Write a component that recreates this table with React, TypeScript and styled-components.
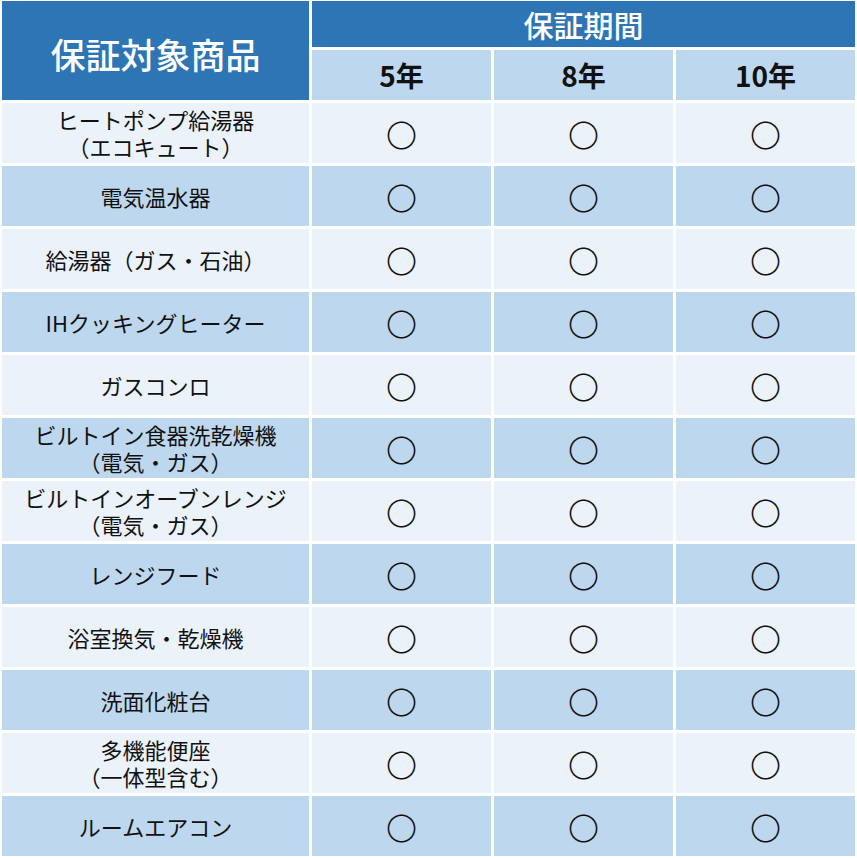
import styled, { createGlobalStyle } from "styled-components";

const GlobalStyle = createGlobalStyle`
  html, body {
    margin: 0;
    padding: 0;
    background: #ffffff;
  }
  body {
    font-family: "Noto Sans CJK JP", "Noto Sans", sans-serif;
    color: #111111;
  }
`;

const Table = styled.div`
  display: grid;
  grid-template-columns: 307px repeat(3, 179px);
  grid-template-rows: 46px 50px repeat(12, 60px);
  gap: 3px;
  padding: 1px 2px 2px 2px;
  width: 857px;
  box-sizing: border-box;
  background: #ffffff;
`;

const Cell = styled.div`
  display: flex;
  align-items: center;
  justify-content: center;
  text-align: center;
`;

const CornerHead = styled(Cell)`
  grid-row: 1 / span 2;
  background: #2e75b6;
  color: #ffffff;
  font-size: 35px;
  font-weight: 500;
  padding-top: 6px;
  box-sizing: border-box;
`;

const PeriodHead = styled(Cell)`
  grid-column: 2 / span 3;
  background: #2e75b6;
  color: #ffffff;
  font-size: 30px;
  font-weight: 500;
`;

const YearHead = styled(Cell)`
  background: #bdd7ee;
  font-size: 28px;
  font-weight: 600;
`;

const NameCell = styled(Cell)<{ $alt: boolean }>`
  background: ${(p) => (p.$alt ? "#bdd7ee" : "#ebf2f9")};
  flex-direction: column;
`;

const NameLine = styled.div`
  font-size: 22px;
  line-height: 27px;
  height: 27px;
  white-space: nowrap;
`;

const MarkCell = styled(Cell)<{ $alt: boolean }>`
  background: ${(p) => (p.$alt ? "#bdd7ee" : "#ebf2f9")};
  font-size: 31px;
  font-weight: 300;
  line-height: 1;
`;

const products: string[][] = [
  ["ヒートポンプ給湯器", "（エコキュート）"],
  ["電気温水器"],
  ["給湯器（ガス・石油）"],
  ["IHクッキングヒーター"],
  ["ガスコンロ"],
  ["ビルトイン食器洗乾燥機", "（電気・ガス）"],
  ["ビルトインオーブンレンジ", "（電気・ガス）"],
  ["レンジフード"],
  ["浴室換気・乾燥機"],
  ["洗面化粧台"],
  ["多機能便座", "（一体型含む）"],
  ["ルームエアコン"],
];

const years = ["5年", "8年", "10年"];

function App() {
  return (
    <>
      <GlobalStyle />
      <Table>
        <CornerHead>保証対象商品</CornerHead>
        <PeriodHead>保証期間</PeriodHead>
        {years.map((y) => (
          <YearHead key={y}>{y}</YearHead>
        ))}
        {products.map((lines, i) => {
          const alt = i % 2 === 1;
          return [
            <NameCell key={`n${i}`} $alt={alt}>
              {lines.map((l) => (
                <NameLine key={l}>{l}</NameLine>
              ))}
            </NameCell>,
            ...years.map((y) => (
              <MarkCell key={`${i}-${y}`} $alt={alt}>
                〇
              </MarkCell>
            )),
          ];
        })}
      </Table>
    </>
  );
}

export default App;
